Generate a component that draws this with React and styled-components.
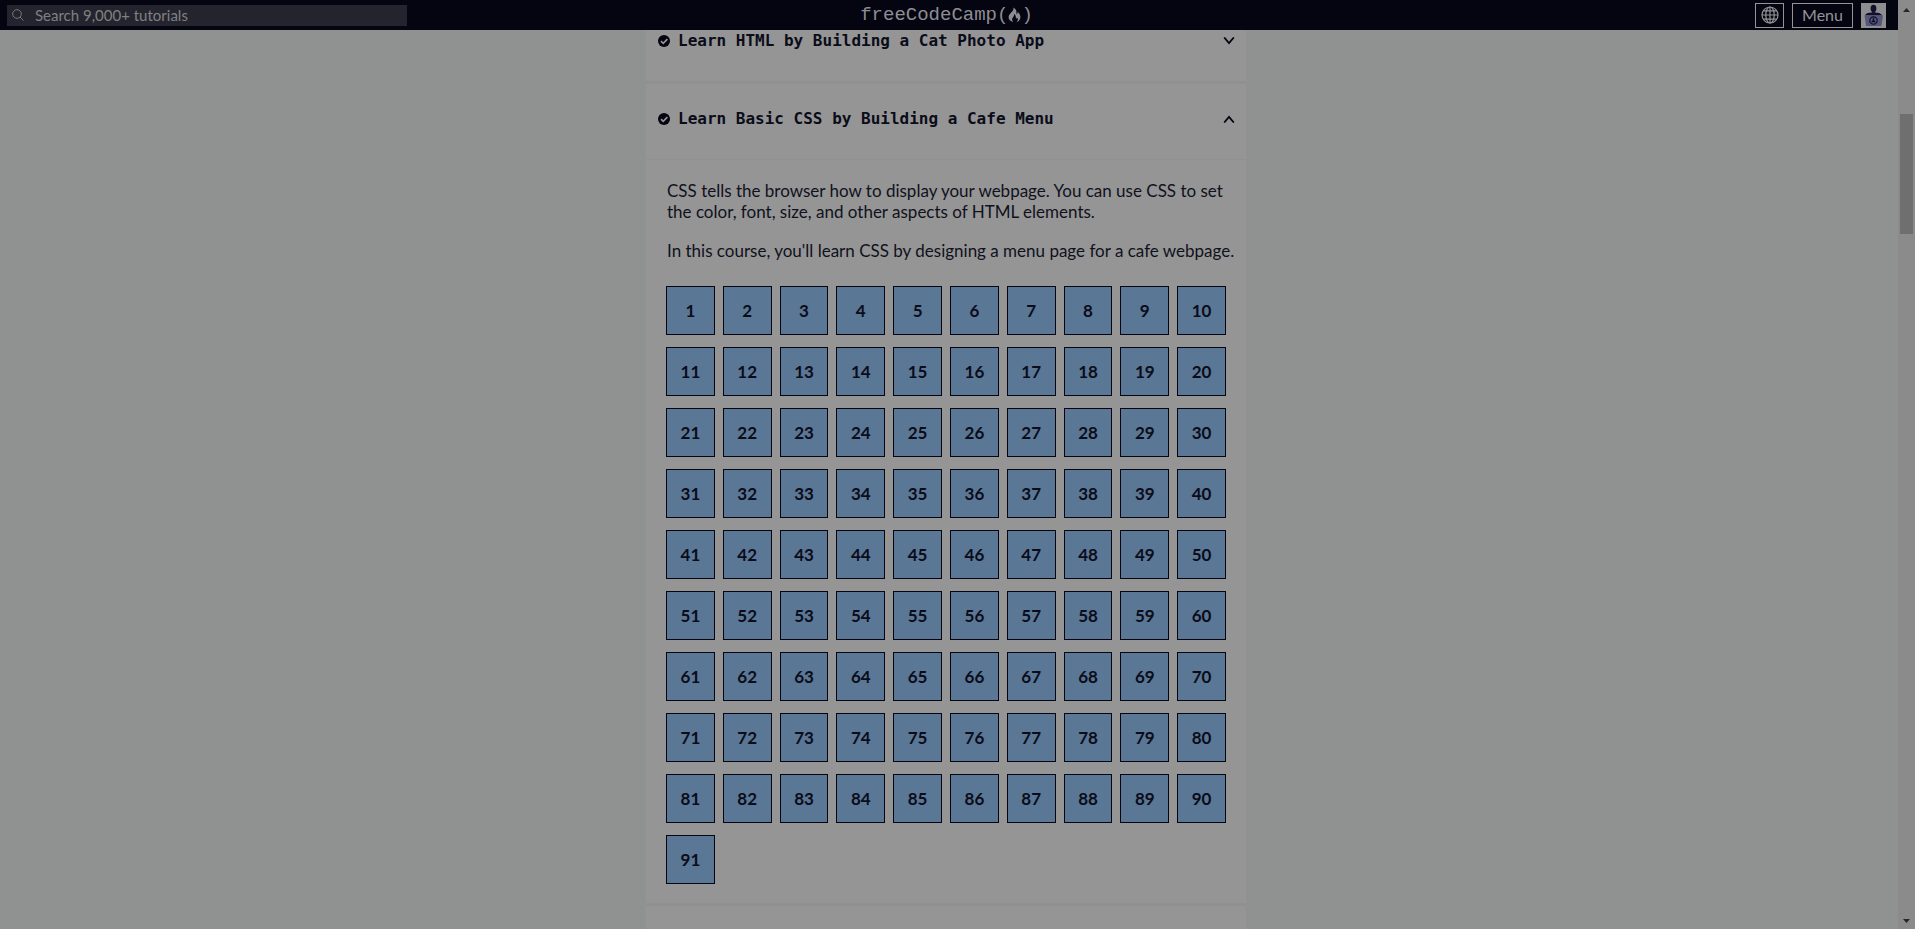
import React from "react";
import styled, { createGlobalStyle } from "styled-components";

const sans = `Lato, "Liberation Sans", sans-serif`;
const mono = `"DejaVu Sans Mono", "Liberation Mono", monospace`;

const GlobalStyle = createGlobalStyle`
  * { box-sizing: border-box; }
  body { margin: 0; background: #8f9291; color: #090a17; font-family: ${sans}; }
`;

const Page = styled.div`
  display: flex;
  min-height: 100vh;
`;

const Site = styled.div`
  flex: 1;
  min-width: 0;
  display: flex;
  flex-direction: column;
`;

const NavBar = styled.header`
  display: grid;
  grid-template-columns: 1fr auto 1fr;
  align-items: center;
  height: 30px;
  padding: 0 12px 0 7px;
  background: #050411;
`;

const SearchForm = styled.form`
  display: flex;
  align-items: center;
  gap: 11px;
  width: 100%;
  max-width: 400px;
  height: 21px;
  padding: 0 5px;
  background: #24242e;
  color: #77777a;
`;

const SearchInput = styled.input`
  flex: 1;
  min-width: 0;
  border: 0;
  padding: 0;
  background: transparent;
  color: #8b8b8b;
  font: 15px/20px ${sans};
  outline: none;
  &::placeholder { color: #808083; opacity: 1; }
`;

const Logo = styled.a`
  display: flex;
  align-items: center;
  color: #8e8e92;
  font: 19px/28px "Liberation Mono", monospace;
  text-decoration: none;
`;

const NavActions = styled.div`
  display: flex;
  justify-content: flex-end;
  gap: 8px;
`;

const NavButton = styled.button`
  display: flex;
  align-items: center;
  justify-content: center;
  width: ${(p) => (p.$wide ? 61 : 29)}px;
  height: 25px;
  padding: 0;
  border: 1px solid #949496;
  background: #050411;
  color: #949496;
  font: 16px/20px ${sans};
`;

const Avatar = styled.a`
  display: block;
  width: 25px;
  height: 25px;
  background: #8e8e90;
`;

const Main = styled.main`
  flex: 1;
  display: flex;
  justify-content: center;
  padding-right: 6px;
`;

const Course = styled.div`
  display: flex;
  flex-direction: column;
  width: 100%;
  max-width: 600px;
`;

const Block = styled.section`
  background: #959595;
  border-bottom: ${(p) => (p.$last ? 0 : 3)}px solid #909090;
  flex-grow: ${(p) => (p.$last ? 1 : 0)};
`;

const BlockHeading = styled.h3`
  margin: 0;
`;

const BlockToggle = styled.button`
  display: flex;
  align-items: center;
  gap: 8px;
  width: 100%;
  padding: ${(p) => (p.$top ? 0 : 24)}px 11px 29px 12px;
  border: 0;
  border-bottom: ${(p) => (p.$open ? 1 : 0)}px solid #909090;
  background: transparent;
  color: #0b0c19;
  font: bold 16px/22px ${mono};
  text-align: left;
`;

const BlockTitle = styled.span`
  flex: 1;
`;

const BlockBody = styled.div`
  padding: 20px 0 19px;
`;

const Intro = styled.p`
  margin: 0 0 18px;
  padding: 0 6px 0 21px;
  color: #10111c;
  font: 400 17px/21px ${sans};
`;

const StepGrid = styled.nav`
  display: grid;
  grid-template-columns: repeat(10, 1fr);
  gap: 12px 8px;
  padding: 7px 20px 0;
`;

const Step = styled.a`
  display: flex;
  align-items: center;
  justify-content: center;
  height: 49px;
  border: 1px solid #050411;
  background: #5a7796;
  color: #0b0c19;
  font: bold 17px/20px ${sans};
  text-decoration: none;
`;

const ScrollTrack = styled.div`
  display: flex;
  flex-direction: column;
  align-items: center;
  width: 17px;
  padding: 8px 0 6px;
  background: #8b8b8b;
  color: #272727;
`;

const ScrollThumb = styled.div`
  width: 13px;
  height: 120px;
  margin: 102px 0 auto;
  background: #6f6f6f;
`;

const ArrowIcon = ({ down }) => (
  <svg width="7" height="4" viewBox="0 0 7 4" fill="currentColor" aria-hidden="true">
    <path d={down ? "M0 0h7L3.5 4z" : "M0 4h7L3.5 0z"} />
  </svg>
);

const SearchIcon = () => (
  <svg width="12" height="12" viewBox="0 0 12 12" fill="none" stroke="currentColor" aria-hidden="true">
    <circle cx="5" cy="5" r="4.300" />
    <path d="M8 8l3.500 3.500" />
  </svg>
);

const FlameIcon = () => (
  <svg width="13" height="16" viewBox="0 0 13 16" fill="currentColor" aria-hidden="true">
    <path d="M5.2.5C7.900 1.800 8.700 3.800 8.400 6c-.1 1.300 1.100 1.300 1.200.1 0-.5-.1-.9-.3-1.300C11.300 6.200 12.500 8 12.400 10.200c-.1 2.400-1.500 4.100-3.700 5.100 1.300-1.500 1.600-3 .6-4.500-.5.900-1.600.7-1.500-.4.1-1.500-.5-2.600-1.900-3.300.4 1.800-.4 2.600-1.200 3.600-.9 1.300-.8 2.900.5 4.400C2.500 14.200.600 12.600.600 10.200c0-1.800.9-3 2.200-4.300C4.600 4.200 6.100 2.700 5.200.500z" />
  </svg>
);

const GlobeIcon = () => (
  <svg width="18" height="18" viewBox="0 0 18 18" fill="none" stroke="currentColor" strokeWidth="1.2" aria-hidden="true">
    <circle cx="9" cy="9" r="8" />
    <ellipse cx="9" cy="9" rx="4.200" ry="8" />
    <path d="M9 1v16M1 9h16M2.300 4.800h13.400M2.300 13.200h13.400" />
  </svg>
);

const AvatarIcon = () => (
  <svg width="25" height="25" viewBox="0 0 25 25" aria-hidden="true">
    <ellipse cx="12.500" cy="5.500" rx="2.900" ry="3.700" fill="#10102a" />
    <path d="M11.300 8h2.400v1.600c4.300.3 6.800 1 7.300 3H4c.5-2 3-2.700 7.300-3z" fill="#10102a" />
    <path d="M3.500 12.300h18.500L20.400 23H5z" fill="#56567a" />
    <circle cx="12.500" cy="17.500" r="3.700" fill="none" stroke="#10102a" strokeWidth="1.200" />
    <path d="M12.500 15v2.500M10.800 19.500l1.700-2.500 1.700 2.500" fill="none" stroke="#10102a" strokeWidth="1.300" />
  </svg>
);

const CheckIcon = () => (
  <svg width="12" height="12" viewBox="0 0 12 12" aria-hidden="true">
    <circle cx="6" cy="6" r="6" fill="#050411" />
    <path d="M3 6.200l2.200 2.100 4.200-4.200" fill="none" stroke="#959595" strokeWidth="1.700" />
  </svg>
);

const ChevronIcon = ({ open }) => (
  <svg width="12" height="8" viewBox="0 0 12 8" fill="none" stroke="#050411" strokeWidth="1.800" aria-hidden="true">
    <path d={open ? "M1.200 7.500L6 1.800 10.800 7.500" : "M1.200 .5L6 6.200 10.800 .5"} />
  </svg>
);

const steps = Array.from({ length: 91 }, (_, i) => i + 1);

function BlockHeader({ title, open, top }) {
  return (
    <BlockHeading>
      <BlockToggle type="button" aria-expanded={!!open} $open={open} $top={top}>
        <CheckIcon />
        <BlockTitle>{title}</BlockTitle>
        <ChevronIcon open={open} />
      </BlockToggle>
    </BlockHeading>
  );
}

export default function App() {
  return (
    <Page>
      <GlobalStyle />
      <Site>
        <NavBar>
          <SearchForm role="search">
            <SearchIcon />
            <SearchInput type="text" aria-label="Search" placeholder="Search 9,000+ tutorials" />
          </SearchForm>
          <Logo href="#home">
            freeCodeCamp(<FlameIcon />)
          </Logo>
          <NavActions>
            <NavButton type="button" aria-label="Language"><GlobeIcon /></NavButton>
            <NavButton type="button" $wide>Menu</NavButton>
            <Avatar href="#profile" aria-label="Profile"><AvatarIcon /></Avatar>
          </NavActions>
        </NavBar>
        <Main>
          <Course>
            <Block>
              <BlockHeader top title="Learn HTML by Building a Cat Photo App" />
            </Block>
            <Block>
              <BlockHeader open title="Learn Basic CSS by Building a Cafe Menu" />
              <BlockBody>
                <Intro>
                  CSS tells the browser how to display your webpage. You can use CSS to set
                  the color, font, size, and other aspects of HTML elements.
                </Intro>
                <Intro>
                  In this course, you'll learn CSS by designing a menu page for a cafe webpage.
                </Intro>
                <StepGrid aria-label="Steps">
                  {steps.map((n) => (
                    <Step key={n} href={`#step-${n}`}>{n}</Step>
                  ))}
                </StepGrid>
              </BlockBody>
            </Block>
            <Block $last />
          </Course>
        </Main>
      </Site>
      <ScrollTrack aria-hidden="true">
        <ArrowIcon />
        <ScrollThumb />
        <ArrowIcon down />
      </ScrollTrack>
    </Page>
  );
}
